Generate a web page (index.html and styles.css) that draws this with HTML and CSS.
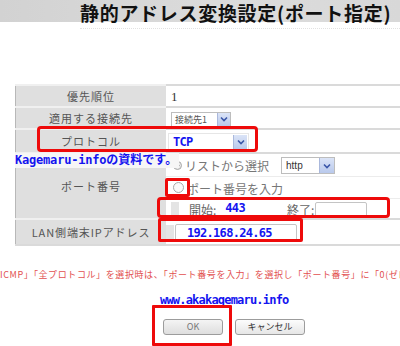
FILE: index.html
```html
<!DOCTYPE html>
<html lang="ja">
<head>
    <meta charset="UTF-8">
    <title>静的アドレス変換設定(ポート指定)</title>
    <link rel="stylesheet" href="styles.css">
</head>
<body>
    <div id="page">
        <div class="titlebar">
            <div class="cut"><span>編集</span><span class="gap">設定ボート</span></div>
            <h1>静的アドレス変換設定(ポート指定)</h1>
        </div>
        <div class="rule"></div>

        <table class="form">
            <tr class="r1">
                <th>優先順位</th>
                <td><span class="num">1</span></td>
            </tr>
            <tr class="r2">
                <th>適用する接続先</th>
                <td><span class="sel sel-conn">接続先1<i class="arr"><svg width="8" height="6" viewBox="0 0 8 6"><path d="M1 1.5 L4 4.5 L7 1.5" fill="none" stroke="#3a56a8" stroke-width="1.6"/></svg></i></span></td>
            </tr>
            <tr class="r3">
                <th>プロトコル</th>
                <td><span class="sel sel-proto"><b class="blue">TCP</b><i class="arr"><svg width="8" height="6" viewBox="0 0 8 6"><path d="M1 1.5 L4 4.5 L7 1.5" fill="none" stroke="#3a56a8" stroke-width="1.6"/></svg></i></span></td>
            </tr>
            <tr class="r4">
                <th rowspan="3">ポート番号</th>
                <td><span class="radio on"></span><span class="opt">リストから選択</span><span class="sel sel-http">http<i class="arr"><svg width="8" height="6" viewBox="0 0 8 6"><path d="M1 1.5 L4 4.5 L7 1.5" fill="none" stroke="#3a56a8" stroke-width="1.6"/></svg></i></span></td>
            </tr>
            <tr class="r5">
                <td><span class="radio"></span><span class="opt">ポート番号を入力</span></td>
            </tr>
            <tr class="r6">
                <td class="range"><span class="indent"></span><span class="lbl">開始:</span><b class="blue">443</b><span class="lbl end">終了:</span><span class="box box-end"></span></td>
            </tr>
            <tr class="r7">
                <th>LAN側端末IPアドレス</th>
                <td><span class="indent"></span><span class="box box-ip"><b class="blue">192.168.24.65</b></span></td>
            </tr>
        </table>

        <p class="note">ICMP」「全プロトコル」を選択時は、「ポート番号を入力」を選択し「ポート番号」に「0(ゼロ)」を入力</p>
        <p class="url">www.akakagemaru.info</p>
        <div class="buttons">
            <button class="btn btn-ok">OK</button>
            <button class="btn btn-cancel">キャンセル</button>
        </div>

        <!-- annotations drawn over the screenshot -->
        <div class="annot"><span class="latin">Kagemaru-info</span>の資料です。</div>
        <div class="mark m-proto"></div>
        <div class="mark m-radio"></div>
        <div class="mark m-range"></div>
        <div class="mark m-ip"></div>
        <div class="mark m-ok"></div>
    </div>
</body>
</html>
```

FILE: styles.css
```css
body {
    margin: 0;
    background: #fff;
    font-family: "Noto Sans CJK JP", sans-serif;
}
#page {
    position: relative;
    width: 400px; height: 346px;
    overflow: hidden;
}
.titlebar {
    height: 22px;
    background: linear-gradient(90deg, #d2d2d2, #dcdcdc 60%, #d8d8d8);
}
.cut { height: 3px; overflow: hidden; padding-left: 15px; }
.cut span {
    display: inline-block; margin-top: -10px;
    font-size: 13px; line-height: 13px; font-weight: bold; color: #111;
}
.cut .gap { margin-left: 18px; }
h1 {
    margin: 0; padding-left: 80px;
    font-size: 19px; line-height: 19px; font-weight: bold;
    letter-spacing: 0.7px; color: #111;
    white-space: nowrap;
}
.rule { margin: 6px 0 0 80px; border-top: 1px dotted #e2e2e2; }

.form {
    margin: 55px 0 0 15px;
    width: 385px;
    border-collapse: collapse;
    table-layout: fixed;
}
.form th {
    width: 150px; padding: 0;
    background: #dfdfdf;
    border-top: 2px solid #f0f0f0;
    border-left: 1px solid #b8b8b8;
    font-size: 11px; font-weight: normal; letter-spacing: 1px;
    color: #555; text-align: center;
}
.form td {
    padding: 0 0 0 5px;
    border-top: 2px solid #dadada;
    font-size: 11px; color: #666;
    white-space: nowrap;
}
.form .r1 { height: 22px; }
.form .r2 { height: 22px; }
.form .r3 { height: 24px; }
.form .r4 { height: 23px; }
.form .r5 { height: 22px; }
.form .r6 { height: 21px; }
.form .r7 { height: 26px; }
.form .r7 th, .form .r7 td { border-bottom: 2px solid #dadada; }
.form .r5 td { border-top: 1px solid #ececec; }
.form .r6 td { border-top: 1px solid #ececec; }
.form .r7 th { font-size: 11px; letter-spacing: 0.9px; }

.num { font-family: "Liberation Serif", serif; font-size: 13px; color: #333; }

.blue {
    font-family: "DejaVu Sans Mono", "Noto Sans CJK JP", monospace;
    font-size: 12px; font-weight: bold; letter-spacing: -0.7px;
    color: #1414f0;
}

.sel {
    display: inline-flex; align-items: center; justify-content: space-between;
    box-sizing: border-box;
    background: #fff; border: 1px solid #bdbdbd;
    vertical-align: middle;
}
.arr {
    display: flex; align-items: center; justify-content: center;
    align-self: stretch; width: 12px;
    background: linear-gradient(#dbe4f7, #b9c9ec);
    border-left: 1px solid #aab8dc;
}
.sel-conn { width: 60px; height: 15px; padding-left: 3px; font-size: 9px; color: #555; }
.sel-proto { width: 81px; height: 18px; padding-left: 4px; margin-left: -3px; border-color: #e6e6e6; }
.sel-proto .arr { width: 13px; margin: 1px 1px 1px 0; }
.sel-http {
    width: 54px; height: 17px; padding-left: 4px; margin-left: 12px;
    font-family: "Liberation Sans", sans-serif; font-size: 10px; color: #333;
}
.sel-http .arr { width: 14px; }

.radio {
    display: inline-block; box-sizing: border-box;
    width: 9px; height: 9px; margin: 0 3px 0 2px;
    border: 1px solid #a8a8a8; border-radius: 50%;
    background: #f2f2f2; vertical-align: middle;
}
.radio.on { background: radial-gradient(circle, #8a8a8a 0 1.8px, #e8e8e8 2.2px); }
.r5 .radio { width: 11px; height: 11px; background: #fafafa; }
.opt { font-size: 12px; color: #777; vertical-align: middle; }

.range .indent, .r7 .indent {
    display: inline-block; width: 8px; height: 15px;
    margin-right: 1px; background: #e4e4e4; vertical-align: middle;
}
.range { padding-left: 0; }
.lbl { font-size: 12px; color: #666; vertical-align: middle; margin: 0 9px 0 9px; }
.lbl.end { margin: 0 1px 0 42px; }
.box {
    display: inline-flex; align-items: center; box-sizing: border-box;
    background: #fff; border: 1px solid #c4c4c4; border-radius: 2px;
    vertical-align: middle;
}
.box-end { width: 52px; height: 15px; }
.r7 td { padding-left: 0; }
.box-ip { width: 122px; height: 17px; padding-left: 11px; }

.note {
    margin: 23px 0 0; height: 11px;
    font-size: 9px; line-height: 11px; letter-spacing: 0.6px; color: #e25050;
    white-space: nowrap; overflow: hidden;
}
.url {
    margin: 13px 0 0; padding-left: 160px;
    font-family: "DejaVu Sans Mono", monospace;
    font-size: 12px; line-height: 15px; font-weight: bold;
    letter-spacing: -0.8px; color: #1414f0;
}
.buttons { display: flex; gap: 12px; margin-top: 11px; padding-left: 163px; }
.btn {
    height: 16px; padding: 0;
    border: 1px solid #9c9c9c; border-radius: 3px;
    background: linear-gradient(#f4f4f4, #dedede);
    font-family: "Noto Sans CJK JP", sans-serif; font-size: 9px; line-height: 14px;
}
.btn-ok { width: 60px; color: #777; }
.btn-cancel { width: 70px; color: #333; background: linear-gradient(#fcfcfc, #e6e6e6); }

.annot {
    position: absolute; left: 15px; top: 153px;
    padding-right: 2px;
    background: #f6f6f6;
    font-family: "DejaVu Sans Mono", "Noto Sans CJK JP", monospace;
    font-size: 12px; line-height: 15px; font-weight: bold;
    color: #1414f0; white-space: nowrap;
}
.annot .latin { letter-spacing: -0.2px; }

.mark {
    position: absolute;
    border: 3px solid #ee0a0a; border-radius: 4px;
}
.m-proto { left: 37px; top: 126px; width: 215px; height: 20px; }
.m-radio { left: 165px; top: 178px; width: 19px; height: 13px; border-radius: 2px; }
.m-range { left: 157px; top: 197px; width: 227px; height: 15px; }
.m-ip { left: 158px; top: 218px; width: 139px; height: 18px; border-radius: 2px; }
.m-ok { left: 152px; top: 305px; width: 74px; height: 35px; border-radius: 1px; }
```
